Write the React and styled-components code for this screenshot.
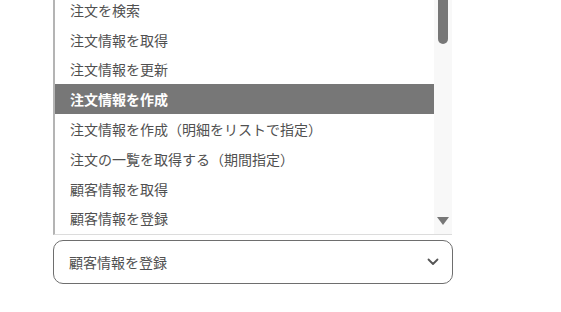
import React from 'react';
import styled, { createGlobalStyle } from 'styled-components';

const GlobalStyle = createGlobalStyle`
  body {
    margin: 0;
    background: #fff;
    font-family: "Noto Sans CJK JP", "Noto Sans", sans-serif;
  }
`;

const Page = styled.div`
  width: 561px;
  height: 312px;
  overflow: hidden;
  padding-left: 53px;
  box-sizing: border-box;
`;

const Listbox = styled.div`
  width: 399px;
  height: 235px;
  display: flex;
  border-left: 2px solid #b4b4b4;
  border-bottom: 1px solid #dcdcdc;
  box-sizing: border-box;
  overflow: hidden;
  background: #fff;
`;

const Options = styled.ul`
  flex: 1;
  list-style: none;
  margin: -5px 0 0;
  padding: 0;
`;

const Option = styled.li`
  height: 29.8px;
  display: flex;
  align-items: center;
  padding-left: 15px;
  font-size: 14px;
  color: ${p => (p.$active ? '#fff' : '#505050')};
  background: ${p => (p.$active ? '#777' : 'transparent')};
  font-weight: ${p => (p.$active ? 700 : 400)};
  white-space: nowrap;
`;

const Scrollbar = styled.div`
  width: 18px;
  background: #f8f8f8;
  display: flex;
  flex-direction: column;
  align-items: center;
  justify-content: space-between;
  padding-bottom: 9px;
  box-sizing: border-box;
`;

const Thumb = styled.div`
  width: 10px;
  height: 44px;
  background: #777;
  border-radius: 0 0 5px 5px;
`;

const Arrow = styled.div`
  width: 0;
  height: 0;
  border-left: 6px solid transparent;
  border-right: 6px solid transparent;
  border-top: 8px solid #777;
`;

const Select = styled.div`
  margin-top: 5px;
  width: 400px;
  height: 44px;
  border: 1px solid #6e6e6e;
  border-radius: 10px;
  box-sizing: border-box;
  display: flex;
  align-items: center;
  justify-content: space-between;
  padding: 0 13px 0 15px;
  font-size: 14px;
  color: #505050;
`;

const items = [
  '注文を検索',
  '注文情報を取得',
  '注文情報を更新',
  '注文情報を作成',
  '注文情報を作成（明細をリストで指定）',
  '注文の一覧を取得する（期間指定）',
  '顧客情報を取得',
  '顧客情報を登録',
];

export default function App() {
  return (
    <Page>
      <GlobalStyle />
      <Listbox>
        <Options>
          {items.map((t, i) => (
            <Option key={i} $active={i === 3}>{t}</Option>
          ))}
        </Options>
        <Scrollbar>
          <Thumb />
          <Arrow />
        </Scrollbar>
      </Listbox>
      <Select>
        <span>顧客情報を登録</span>
        <svg width="12" height="8" viewBox="0 0 12 8">
          <path d="M1.5 1.5 L6 6 L10.5 1.5" fill="none" stroke="#555" strokeWidth="1.8" strokeLinecap="round" strokeLinejoin="round" />
        </svg>
      </Select>
    </Page>
  );
}
